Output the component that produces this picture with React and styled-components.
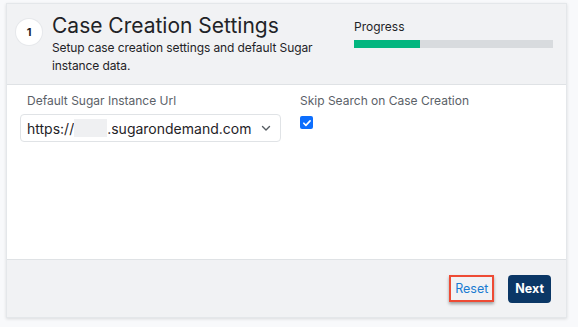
import React from 'react';
import styled, {createGlobalStyle} from 'styled-components';

const color = {
  page: '#f8f9fb',
  panel: '#f1f2f4',
  line: '#dfe2e5',
  text: '#1f2327',
  muted: '#5b6168',
  green: '#02b67f',
  track: '#d8dbde',
  navy: '#0b3766',
  link: '#1a7bd1',
  red: '#ee4b35',
  check: '#0d6efd'
};

const GlobalStyle = createGlobalStyle`
  body {
    margin: 0;
    background: ${color.page};
    font-family: Inter, "Noto Sans", sans-serif;
  }
`;

const Page = styled.div`
  padding: 3px 11px 10px 6px;
`;

const Card = styled.div`
  width: 561px;
  background: #fff;
  border: 1px solid #e4e7ea;
  box-shadow: 0 1px 3px rgba(0, 0, 0, 0.12);
  box-sizing: border-box;
  display: flex;
  flex-direction: column;
`;

const Header = styled.div`
  height: 81px;
  background: ${color.panel};
  border-bottom: 1px solid ${color.line};
  display: flex;
  justify-content: space-between;
  padding: 8px 13px 0 9px;
  box-sizing: border-box;
`;

const TitleBlock = styled.div`
  display: flex;
  gap: 10px;
`;

const Step = styled.div`
  width: 22px;
  height: 22px;
  margin-top: 7px;
  border-radius: 50%;
  background: #fff;
  border: 2px solid #fff;
  box-shadow: 0 0 0 1px #e6e8eb;
  display: flex;
  align-items: center;
  justify-content: center;
  font-size: 11px;
  font-weight: 700;
  color: ${color.text};
  flex-shrink: 0;
`;

const TitleText = styled.div`
  max-width: 282px;
`;

const Title = styled.h1`
  margin: 0;
  font-size: 21px;
  font-weight: 400;
  line-height: 27px;
  color: ${color.text};
`;

const Subtitle = styled.p`
  margin: 0;
  font-size: 12px;
  letter-spacing: -0.1px;
  line-height: 18px;
  color: ${color.text};
`;

const Progress = styled.div`
  width: 199px;
  padding-top: 7px;
`;

const ProgressLabel = styled.div`
  font-size: 12px;
  line-height: 16px;
  color: ${color.text};
  margin-bottom: 5px;
`;

const Track = styled.div`
  height: 8px;
  background: ${color.track};
`;

const Fill = styled.div`
  height: 100%;
  background: ${color.green};
`;

const Body = styled.div`
  height: 174px;
  box-sizing: border-box;
  padding: 8px 13px 0 13px;
  display: grid;
  grid-template-columns: 261px 1fr;
  column-gap: 19px;
  align-items: start;
`;

const Field = styled.div`
  display: flex;
  flex-direction: column;
  gap: 5px;
`;

const Label = styled.label`
  font-size: 12px;
  line-height: 16px;
  color: ${color.muted};
  padding-left: ${p => (p.$inset ? '7px' : '0')};
`;

const Select = styled.div`
  height: 28px;
  box-sizing: border-box;
  border: 1px solid #e0e3e6;
  border-radius: 4px;
  display: flex;
  align-items: center;
  padding: 0 8px 0 6px;
  font-size: 14px;
  color: ${color.text};
`;

const Redacted = styled.span`
  display: inline-block;
  width: 33px;
  height: 18px;
  background: #eff0f2;
`;

const Chevron = styled.svg`
  margin-left: auto;
  flex-shrink: 0;
`;

const Check = styled.span`
  width: 13px;
  height: 13px;
  margin-top: 2px;
  border-radius: 2px;
  background: ${color.check};
  display: flex;
  align-items: center;
  justify-content: center;
`;

const Footer = styled.div`
  height: 58px;
  background: ${color.panel};
  border-top: 1px solid ${color.line};
  box-sizing: border-box;
  display: flex;
  justify-content: flex-end;
  align-items: center;
  gap: 14px;
  padding: 0 15px 0 0;
`;

const Button = styled.button`
  font-family: Inter, "Noto Sans", sans-serif;
  font-size: 12.5px;
  height: ${p => (p.$primary ? '28px' : '27px')};
  padding: ${p => (p.$primary ? '0 7px' : '0 4px')};
  border-radius: ${p => (p.$primary ? '4px' : '0')};
  background: ${p => (p.$primary ? color.navy : 'transparent')};
  color: ${p => (p.$primary ? '#fff' : color.link)};
  font-weight: ${p => (p.$primary ? 700 : 400)};
  border: ${p => (p.$primary ? 'none' : `2px solid ${color.red}`)};
  box-shadow: ${p => (p.$primary ? 'none' : '0 2px 3px rgba(0,0,0,0.35)')};
  cursor: pointer;
`;

export default function App() {
  return (
    <Page>
      <GlobalStyle />
      <Card>
        <Header>
          <TitleBlock>
            <Step>1</Step>
            <TitleText>
              <Title>Case Creation Settings</Title>
              <Subtitle>Setup case creation settings and default Sugar instance data.</Subtitle>
            </TitleText>
          </TitleBlock>
          <Progress>
            <ProgressLabel>Progress</ProgressLabel>
            <Track>
              <Fill style={{width: `${(1 / 3) * 100}%`}} />
            </Track>
          </Progress>
        </Header>
        <Body>
          <Field>
            <Label $inset>Default Sugar Instance Url</Label>
            <Select>
              https://<Redacted />.sugarondemand.com
              <Chevron width="12" height="12" viewBox="0 0 24 24" fill="none" stroke="#555b61" strokeWidth="2.8" strokeLinecap="round" strokeLinejoin="round">
                <path d="M5 9l7 7 7-7" />
              </Chevron>
            </Select>
          </Field>
          <Field>
            <Label>Skip Search on Case Creation</Label>
            <Check>
              <svg width="10" height="10" viewBox="0 0 12 12">
                <path d="M2.2 6.3l2.5 2.5 5-5.4" fill="none" stroke="#fff" strokeWidth="2" strokeLinecap="round" strokeLinejoin="round" />
              </svg>
            </Check>
          </Field>
        </Body>
        <Footer>
          <Button>Reset</Button>
          <Button $primary>Next</Button>
        </Footer>
      </Card>
    </Page>
  );
}
